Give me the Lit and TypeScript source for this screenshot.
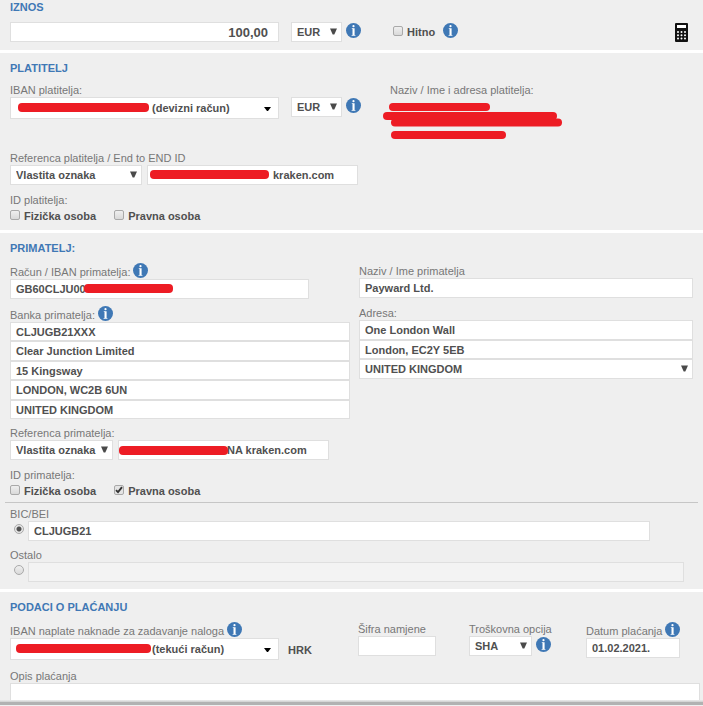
import { LitElement, html, css, svg } from "lit";
import { customElement, property } from "lit/decorators.js";
import { styleMap } from "lit/directives/style-map.js";

interface Mask {
  left: number;
  top: number;
  width: number;
}

const mask = (m: Mask) => html`<span
  class="mask"
  style=${styleMap({ left: `${m.left}px`, top: `${m.top}px`, width: `${m.width}px` })}
></span>`;

const downArrow = html`<svg class="arrow" viewBox="0 0 7 7" aria-hidden="true">
  <path d="M0 0.5H7L4.3 6.5H2.7Z" fill="#4a4a4a" />
</svg>`;

const smallArrow = html`<svg class="arrow small" viewBox="0 0 7 4" aria-hidden="true">
  <path d="M0 0H7L4 4H3Z" fill="#000" />
</svg>`;

@customElement("info-button")
export class InfoButton extends LitElement {
  @property() label = "Pomoć";

  static styles = css`
    :host {
      display: block;
      flex: none;
      height: 15px;
    }
    .info {
      display: block;
      width: 15px;
      height: 15px;
      padding: 0;
      border: 0;
      background: none;
      cursor: pointer;
    }
    .icon {
      display: block;
      width: 15px;
      height: 15px;
    }
  `;

  render() {
    return html`<button class="info" type="button" aria-label=${this.label}>
      <svg class="icon" viewBox="0 0 15 15" aria-hidden="true">
        <circle cx="7.5" cy="7.5" r="7.5" fill="#3f78b5" />
        <circle cx="7.5" cy="3.2" r="1.1" fill="#fff" />
        <path d="M5.8 5.2H8.6V12H9.4V12.7H5.6V12H6.5V5.9H5.8Z" fill="#fff" />
      </svg>
    </button>`;
  }
}

@customElement("app-root")
export class AppRoot extends LitElement {
  static styles = css`
    :host {
      display: block;
      background: #fff;
      color: #505050;
      font: 11px/14px "Liberation Sans", Arial, sans-serif;
    }
    * {
      box-sizing: border-box;
    }
    .form {
      display: flex;
      flex-direction: column;
      gap: 3px;
    }
    .section {
      display: flex;
      flex-direction: column;
      gap: 8px;
      padding: 8px 10px;
      background: #efefef;
    }
    .section.amount-section {
      padding-top: 0;
      padding-right: 15px;
    }
    .section.payer {
      padding-bottom: 5px;
    }
    .section.payee {
      padding-bottom: 7px;
    }
    .section.payment {
      padding: 8px 3px 0 10px;
    }
    .title {
      margin: 0;
      font-size: 11px;
      line-height: 14px;
      font-weight: bold;
      color: #3f78b5;
    }
    .label {
      display: block;
      line-height: 14px;
      color: #777;
      white-space: nowrap;
    }
    .label-row {
      display: flex;
      align-items: flex-end;
      gap: 3px;
      height: 16px;
    }
    .label-row.low {
      height: 15px;
    }
    .label-row > info-button {
      align-self: flex-start;
    }
    .row {
      display: flex;
      align-items: flex-start;
      gap: 4px;
    }
    .row.refs {
      gap: 5px;
    }
    .control {
      position: relative;
      display: block;
      min-width: 0;
    }
    .input,
    .select {
      display: block;
      width: 100%;
      height: 20px;
      margin: 0;
      padding: 0 5px;
      border: 1px solid #dfdfdf;
      border-radius: 0;
      outline: 0;
      background: #fff;
      color: #505050;
      font: bold 11px/14px "Liberation Sans", Arial, sans-serif;
      appearance: none;
    }
    .input:disabled {
      background: #f3f3f3;
    }
    .select.combo {
      height: 22px;
      padding-left: 141px;
    }
    .input.sum {
      padding-right: 10px;
      font-size: 13px;
      text-align: right;
    }
    .input.after-mask {
      padding-left: 125px;
    }
    .input.after-short-mask {
      padding-left: 108px;
    }
    .arrow {
      position: absolute;
      top: 6px;
      right: 5px;
      width: 7px;
      height: 7px;
      pointer-events: none;
    }
    .arrow.small {
      top: 10px;
      right: 8px;
      height: 4px;
    }
    .mask {
      position: absolute;
      height: 9px;
      border-radius: 4px;
      background: #ed1c24;
      pointer-events: none;
    }
    .w-combo {
      width: 269px;
      margin-right: 8px;
    }
    .w-currency {
      width: 51px;
    }
    .w-reference {
      width: 211px;
    }
    .w-kind {
      width: 132px;
    }
    .w-kind-short {
      width: 103px;
    }
    .w-account {
      width: 88%;
    }
    .w-purpose {
      width: 78px;
    }
    .w-cost {
      width: 63px;
    }
    .w-date {
      width: 94px;
    }
    .check {
      display: flex;
      align-items: center;
      gap: 4px;
      font-weight: bold;
      white-space: nowrap;
    }
    .checks {
      display: flex;
      gap: 18px;
      height: 18px;
    }
    .urgent {
      height: 20px;
      margin: 0 4px 0 28px;
    }
    .box,
    .radio {
      flex: none;
      width: 10px;
      height: 10px;
      margin: 0 0 2px;
      border: 1px solid #a9a9a9;
      border-radius: 2px;
      background: linear-gradient(#efefef, #d9d9d9);
      appearance: none;
    }
    .box:checked {
      background: url('data:image/svg+xml,<svg xmlns="http://www.w3.org/2000/svg" viewBox="0 0 8 8"><path d="M1 4.2L3 6.2L7 1.2" fill="none" stroke="%23333" stroke-width="1.9"/></svg>')
        #e4e4e4;
    }
    .radio {
      margin: 3px 0 0 4px;
      border-radius: 5px;
    }
    .radio:checked {
      background: radial-gradient(circle, #505050 2px, #e6e6e6 3px);
    }
    .calculator {
      flex: none;
      width: 13px;
      height: 19px;
      margin: 1px 0 0 auto;
      padding: 0;
      border: 0;
      background: none;
    }
    .glyph {
      display: block;
      width: 13px;
      height: 19px;
    }
    .down {
      margin-top: 1px;
    }
    .payer-grid {
      display: grid;
      grid-template-columns: 380px minmax(0, 1fr);
      min-height: 60px;
    }
    .strokes {
      display: block;
      width: 180px;
      height: 37px;
      margin: 5px 0 0 -7px;
    }
    .payee-grid {
      display: grid;
      grid-template-columns: minmax(0, 340fr) minmax(0, 334fr);
      gap: 9px;
    }
    .stack {
      display: flex;
      flex-direction: column;
      gap: 7px;
    }
    .lines {
      display: grid;
      grid-template-rows: 19px 20px 19px 20px 19px;
    }
    .lines.address {
      grid-template-rows: 20px 19px 20px;
    }
    .lines .input,
    .lines .select {
      height: 100%;
    }
    .codes {
      display: flex;
      flex-direction: column;
      gap: 7px;
      margin: -6px -5px 0;
      padding: 4px 5px 0;
      border-top: 1px solid #c6c6c6;
    }
    .bic {
      flex: 1;
      margin-right: 43px;
    }
    .other {
      flex: 1;
      margin-right: 9px;
    }
    .payment-grid {
      display: grid;
      grid-template-columns: 348fr 111fr 117fr 114fr;
      margin-bottom: 1px;
    }
    .fee {
      gap: 1px;
    }
    .currency {
      font-weight: bold;
      padding-top: 5px;
    }
    .description {
      display: block;
      width: 100%;
      height: 17px;
      padding: 2px 5px;
      border: 1px solid #dfdfdf;
      border-bottom: 0;
      outline: 0;
      background: #fff;
      font: bold 11px/14px "Liberation Sans", Arial, sans-serif;
      resize: none;
      overflow: hidden;
    }
    .edge {
      height: 6px;
      margin: -8px -3px 0 -10px;
      background: linear-gradient(#ececec 0, #cfcfcf 2px, #b2b2b2 2px, #b2b2b2 5px, #f0f0f0 5px);
    }
  `;

  private select(id: string, value: string, width: string, name = "") {
    return html`<span class="control ${width}">
      <select class="select" id=${id} aria-label=${name || value}>
        <option>${value}</option>
      </select>
      ${downArrow}
    </span>`;
  }

  private account(id: string, value: string, hidden: Mask) {
    return html`<span class="control w-combo">
      <select class="select combo" id=${id}>
        <option>${value}</option>
      </select>
      ${mask(hidden)}${smallArrow}
    </span>`;
  }

  private persons(prefix: string, legalChecked: boolean) {
    return html`<div class="checks" role="group" aria-labelledby="${prefix}-id">
      <label class="check"><input class="box" type="checkbox" />Fizička osoba</label>
      <label class="check"
        ><input class="box" type="checkbox" .checked=${legalChecked} />Pravna osoba</label
      >
    </div>`;
  }

  private line(id: string, value: string, name: string) {
    return html`<input class="input" id=${id} aria-label=${name} .value=${value} />`;
  }

  private amountSection() {
    return html`<section class="section amount-section">
      <h2 class="title">IZNOS</h2>
      <div class="row">
        <span class="control w-combo">
          <input class="input sum" aria-label="Iznos" .value=${"100,00"} />
        </span>
        ${this.select("currency", "EUR", "w-currency", "Valuta")}
        <info-button class="down"></info-button>
        <label class="check urgent"><input class="box" type="checkbox" />Hitno</label>
        <info-button class="down"></info-button>
        <button class="calculator" type="button" aria-label="Kalkulator">
          <svg class="glyph" viewBox="0 0 13 19" aria-hidden="true">
            <rect width="13" height="19" rx="1" fill="#111" />
            <rect x="2" y="2" width="9" height="3" fill="#fff" />
            ${[9, 12.2, 15.4].map((y) =>
              [3, 6.5, 10].map((x) => svg`<circle cx=${x} cy=${y} r="1" fill="#fff" />`)
            )}
          </svg>
        </button>
      </div>
    </section>`;
  }

  private payerSection() {
    return html`<section class="section payer">
      <h2 class="title">PLATITELJ</h2>
      <div class="payer-grid">
        <div>
          <label class="label" for="payer-iban">IBAN platitelja:</label>
          <div class="row">
            ${this.account("payer-iban", "(devizni račun)", { left: 8, top: 6, width: 131 })}
            ${this.select("payer-currency", "EUR", "w-currency", "Valuta platitelja")}
            <info-button class="down"></info-button>
          </div>
        </div>
        <div>
          <span class="label">Naziv / Ime i adresa platitelja:</span>
          <svg class="strokes" viewBox="0 0 180 37" aria-hidden="true">
            <g fill="none" stroke="#ed1c24" stroke-width="8" stroke-linecap="round">
              <path d="M10 5H103" />
              <path d="M4 14H170" />
              <path d="M12 20.5H175" />
              <path d="M12 33H119" />
            </g>
          </svg>
        </div>
      </div>
      <div>
        <label class="label" for="payer-ref">Referenca platitelja / End to END ID</label>
        <div class="row refs">
          ${this.select("payer-kind", "Vlastita oznaka", "w-kind")}
          <span class="control w-reference">
            <input class="input after-mask" id="payer-ref" .value=${"kraken.com"} />
            ${mask({ left: 3, top: 5, width: 119 })}
          </span>
        </div>
      </div>
      <div>
        <span class="label" id="payer-id">ID platitelja:</span>
        ${this.persons("payer", false)}
      </div>
    </section>`;
  }

  private payeeSection() {
    return html`<section class="section payee">
      <h2 class="title">PRIMATELJ:</h2>
      <div class="payee-grid">
        <div class="stack">
          <div>
            <div class="label-row">
              <label class="label" for="payee-iban">Račun / IBAN primatelja:</label>
              <info-button></info-button>
            </div>
            <span class="control w-account">
              <input class="input" id="payee-iban" .value=${"GB60CLJU00"} />
              ${mask({ left: 74, top: 5, width: 89 })}
            </span>
          </div>
          <div>
            <div class="label-row">
              <label class="label" for="bank-0">Banka primatelja:</label>
              <info-button></info-button>
            </div>
            <div class="lines">
              ${[
                "CLJUGB21XXX",
                "Clear Junction Limited",
                "15 Kingsway",
                "LONDON, WC2B 6UN",
                "UNITED KINGDOM",
              ].map((v, i) => this.line(`bank-${i}`, v, "Banka primatelja"))}
            </div>
          </div>
          <div>
            <label class="label" for="payee-ref">Referenca primatelja:</label>
            <div class="row refs">
              ${this.select("payee-kind", "Vlastita oznaka", "w-kind-short")}
              <span class="control w-reference">
                <input class="input after-short-mask" id="payee-ref" .value=${"NA kraken.com"} />
                ${mask({ left: 1, top: 6, width: 109 })}
              </span>
            </div>
          </div>
        </div>
        <div class="stack">
          <div>
            <div class="label-row low">
              <label class="label" for="payee-name">Naziv / Ime primatelja</label>
            </div>
            <input class="input" id="payee-name" .value=${"Payward Ltd."} />
          </div>
          <div>
            <div class="label-row low">
              <label class="label" for="address-0">Adresa:</label>
            </div>
            <div class="lines address">
              ${["One London Wall", "London, EC2Y 5EB"].map((v, i) =>
                this.line(`address-${i}`, v, "Adresa")
              )}
              ${this.select("country", "UNITED KINGDOM", "", "Država")}
            </div>
          </div>
        </div>
      </div>
      <div>
        <span class="label" id="payee-id">ID primatelja:</span>
        ${this.persons("payee", true)}
      </div>
      <div class="codes">
        <div>
          <label class="label" for="bic">BIC/BEI</label>
          <div class="row">
            <input class="radio" type="radio" name="code" aria-label="BIC/BEI" checked />
            <span class="control bic"><input class="input" id="bic" .value=${"CLJUGB21"} /></span>
          </div>
        </div>
        <div>
          <label class="label" for="other">Ostalo</label>
          <div class="row">
            <input class="radio" type="radio" name="code" aria-label="Ostalo" />
            <span class="control other"><input class="input" id="other" disabled /></span>
          </div>
        </div>
      </div>
    </section>`;
  }

  private paymentSection() {
    return html`<section class="section payment">
      <h2 class="title">PODACI O PLAĆANJU</h2>
      <div class="payment-grid">
        <div>
          <div class="label-row">
            <label class="label" for="fee-iban">IBAN naplate naknade za zadavanje naloga</label>
            <info-button></info-button>
          </div>
          <div class="row fee">
            ${this.account("fee-iban", "(tekući račun)", { left: 6, top: 6, width: 135 })}
            <span class="currency">HRK</span>
          </div>
        </div>
        <div>
          <label class="label" for="purpose">Šifra namjene</label>
          <span class="control w-purpose"><input class="input" id="purpose" /></span>
        </div>
        <div>
          <label class="label" for="cost">Troškovna opcija</label>
          <div class="row">
            ${this.select("cost", "SHA", "w-cost", "Troškovna opcija")}
            <info-button class="down"></info-button>
          </div>
        </div>
        <div>
          <div class="label-row">
            <label class="label" for="date">Datum plaćanja</label>
            <info-button></info-button>
          </div>
          <span class="control w-date">
            <input class="input" id="date" .value=${"01.02.2021."} />
          </span>
        </div>
      </div>
      <div>
        <label class="label" for="description">Opis plaćanja</label>
        <textarea class="description" id="description"></textarea>
      </div>
      <div class="edge"></div>
    </section>`;
  }

  render() {
    return html`<form class="form">
      ${this.amountSection()} ${this.payerSection()} ${this.payeeSection()}
      ${this.paymentSection()}
    </form>`;
  }
}
